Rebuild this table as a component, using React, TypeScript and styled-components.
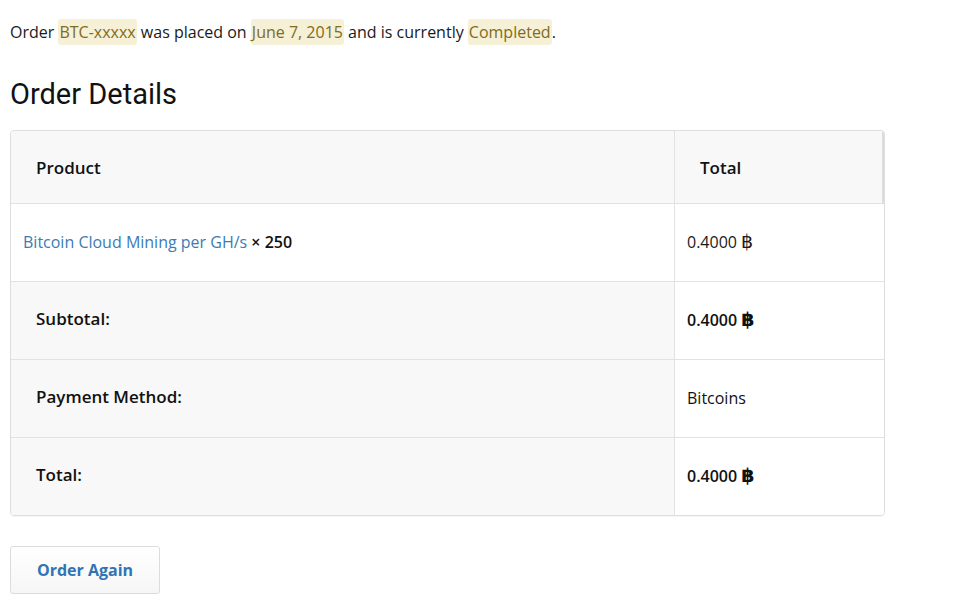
import React from "react";
import styled, { createGlobalStyle } from "styled-components";

const Global = createGlobalStyle`
  html, body { margin: 0; padding: 0; background: #fff; }
  body { font-family: "Open Sans", "Liberation Sans", sans-serif; color: #111; }
`;

const Page = styled.div`
  padding: 10px 10px 0 10px;
  width: 873px;
`;

const Intro = styled.p`
  margin: 9px 0 0 0;
  font-size: 16px;
  line-height: 26px;
  color: #1a1a1a;
`;

const Mark = styled.mark`
  background: #f5f0d6;
  color: #7f6c1c;
  border-radius: 3px;
  padding: 2px 1px;
`;

const Heading = styled.h2`
  margin: 29px 0 0 0;
  font-family: Roboto, "Liberation Sans", sans-serif;
  font-weight: 400;
  font-size: 29px;
  line-height: 40px;
  color: #111;
`;

const Table = styled.table`
  margin-top: 16px;
  width: 873px;
  border-collapse: separate;
  border-spacing: 0;
  border: 1px solid #dedede;
  border-radius: 4px;
  box-shadow: 0 1px 1px rgba(0, 0, 0, 0.04);
  overflow: hidden;
  table-layout: fixed;
`;

const HeadCell = styled.th<{ $last?: boolean }>`
  background: #f8f8f8;
  height: 73px;
  padding: 0 0 0 25px;
  text-align: left;
  font-size: 17px;
  font-weight: 600;
  color: #111;
  border-bottom: 1px solid #e2e2e2;
  border-left: ${(p) => (p.$last ? "1px solid #e2e2e2" : "none")};
  border-right: ${(p) => (p.$last ? "2px solid #dcdcdc" : "none")};
  box-sizing: border-box;
`;

const BodyCell = styled.td<{ $right?: boolean }>`
  height: 77px;
  padding: 0 0 2px 12px;
  font-size: 16px;
  color: #1a1a1a;
  border-left: ${(p) => (p.$right ? "1px solid #e2e2e2" : "none")};
  box-sizing: border-box;
`;

const FootLabel = styled.th`
  background: #f8f8f8;
  height: 78px;
  padding: 0 0 4px 25px;
  text-align: left;
  font-size: 17px;
  font-weight: 600;
  color: #111;
  border-top: 1px solid #e2e2e2;
  box-sizing: border-box;
`;

const FootValue = styled.td<{ $bold?: boolean }>`
  background: #fff;
  height: 78px;
  padding: 0 0 2px 12px;
  font-size: 16px;
  font-weight: ${(p) => (p.$bold ? 600 : 500)};
  color: #111;
  border-top: 1px solid #e2e2e2;
  border-left: 1px solid #e2e2e2;
  box-sizing: border-box;
`;

const Baht = styled.span`
  font-family: "Noto Sans", "DejaVu Sans", sans-serif;
  font-size: 19px;
  line-height: 1;
`;

const ProductLink = styled.a`
  color: #3b7bb6;
  text-decoration: none;
`;

const Qty = styled.strong`
  font-weight: 600;
  color: #111;
`;

const Button = styled.button`
  margin-top: 30px;
  width: 150px;
  height: 48px;
  padding: 0;
  background: linear-gradient(#ffffff, #f6f6f6);
  border: 1px solid #dcdcdc;
  border-radius: 3px;
  box-shadow: 0 1px 1px rgba(0, 0, 0, 0.06);
  font-family: "Open Sans", "Liberation Sans", sans-serif;
  font-size: 16px;
  font-weight: 700;
  color: #2f74b5;
  cursor: pointer;
`;

export default function App() {
  return (
    <Page>
      <Global />
      <Intro>
        Order <Mark>BTC-xxxxx</Mark> was placed on <Mark>June 7, 2015</Mark> and is currently{" "}
        <Mark>Completed</Mark>.
      </Intro>
      <Heading>Order Details</Heading>
      <Table>
        <colgroup>
          <col style={{ width: 663 }} />
          <col style={{ width: 210 }} />
        </colgroup>
        <thead>
          <tr>
            <HeadCell>Product</HeadCell>
            <HeadCell $last>Total</HeadCell>
          </tr>
        </thead>
        <tbody>
          <tr>
            <BodyCell>
              <ProductLink href="#">Bitcoin Cloud Mining per GH/s</ProductLink> <Qty>× 250</Qty>
            </BodyCell>
            <BodyCell $right>
              0.4000 <Baht>฿</Baht>
            </BodyCell>
          </tr>
        </tbody>
        <tfoot>
          <tr>
            <FootLabel>Subtotal:</FootLabel>
            <FootValue $bold>
              0.4000 <Baht>฿</Baht>
            </FootValue>
          </tr>
          <tr>
            <FootLabel>Payment Method:</FootLabel>
            <FootValue>Bitcoins</FootValue>
          </tr>
          <tr>
            <FootLabel>Total:</FootLabel>
            <FootValue $bold>
              0.4000 <Baht>฿</Baht>
            </FootValue>
          </tr>
        </tfoot>
      </Table>
      <Button>Order Again</Button>
    </Page>
  );
}
